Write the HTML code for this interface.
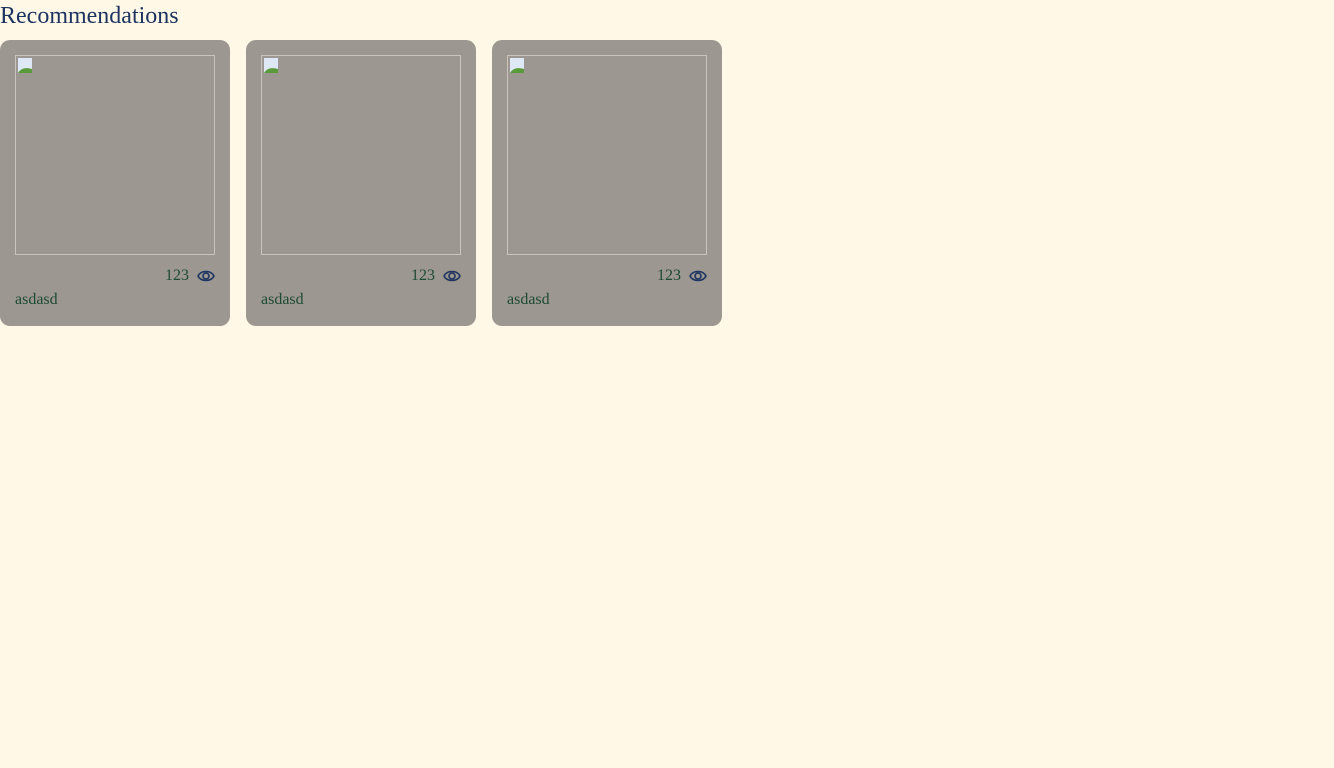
<!DOCTYPE html>
<html><head><style>
body{margin:0;background:#fff8e7;font-family:"Liberation Serif",serif;}
h1{position:absolute;left:0;top:3px;margin:0;font-weight:normal;font-size:24px;color:#1d3461;line-height:26px;}
.card{position:absolute;top:40px;width:230px;height:286px;background:#9c9790;border-radius:10px;}
.img{position:absolute;left:15px;top:15px;width:198px;height:198px;border:1px solid #c9c5bd;}
.ic{position:absolute;left:2px;top:2px;width:15px;height:15px;}
.views{position:absolute;right:15px;top:227px;font-size:16px;color:#1e4a36;display:flex;align-items:center;gap:8px;}
.name{position:absolute;left:15px;top:251px;font-size:16px;color:#1e4a36;}
</style></head><body>
<h1>Recommendations</h1>
<div class="card" style="left:0">
<div class="img"><svg class="ic" viewBox="0 0 15 15"><rect x="0" y="0" width="14" height="15" fill="#dfe9f5"/><path d="M0 15 Q4 8 14 11 L14 15Z" fill="#5a9a3a"/></svg></div>
<div class="views">123 <svg width="18" height="14" viewBox="0 0 18 14"><path d="M1 7 C4 1 14 1 17 7 C14 13 4 13 1 7Z" fill="none" stroke="#1d3461" stroke-width="1.6"/><circle cx="9" cy="7" r="3" fill="none" stroke="#1d3461" stroke-width="1.6"/></svg></div>
<div class="name">asdasd</div></div>
<div class="card" style="left:246px">
<div class="img"><svg class="ic" viewBox="0 0 15 15"><rect x="0" y="0" width="14" height="15" fill="#dfe9f5"/><path d="M0 15 Q4 8 14 11 L14 15Z" fill="#5a9a3a"/></svg></div>
<div class="views">123 <svg width="18" height="14" viewBox="0 0 18 14"><path d="M1 7 C4 1 14 1 17 7 C14 13 4 13 1 7Z" fill="none" stroke="#1d3461" stroke-width="1.6"/><circle cx="9" cy="7" r="3" fill="none" stroke="#1d3461" stroke-width="1.6"/></svg></div>
<div class="name">asdasd</div></div>
<div class="card" style="left:492px">
<div class="img"><svg class="ic" viewBox="0 0 15 15"><rect x="0" y="0" width="14" height="15" fill="#dfe9f5"/><path d="M0 15 Q4 8 14 11 L14 15Z" fill="#5a9a3a"/></svg></div>
<div class="views">123 <svg width="18" height="14" viewBox="0 0 18 14"><path d="M1 7 C4 1 14 1 17 7 C14 13 4 13 1 7Z" fill="none" stroke="#1d3461" stroke-width="1.6"/><circle cx="9" cy="7" r="3" fill="none" stroke="#1d3461" stroke-width="1.6"/></svg></div>
<div class="name">asdasd</div></div>
</body></html>
